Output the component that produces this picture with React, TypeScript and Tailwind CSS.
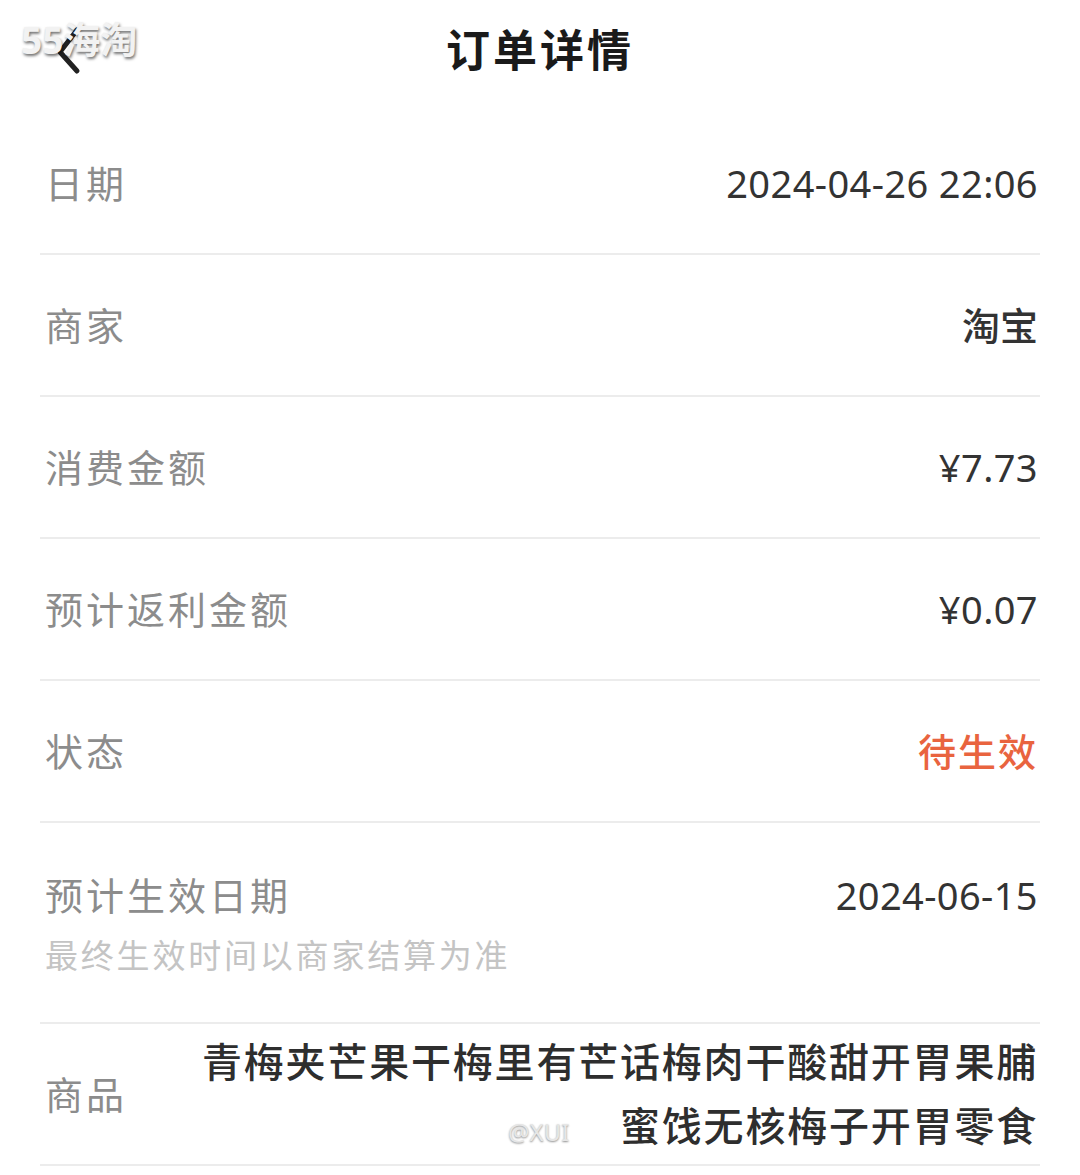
import React from "react";

const FONT = { fontFamily: '"Noto Sans", "Noto Sans CJK SC", sans-serif' };

function Row({ label, value, valueClass = "" }: { label: string; value: string; valueClass?: string }) {
  return (
    <div className="flex h-[142px] items-center justify-between border-b-2 border-[#ececec] pl-[5px] pr-[2px]">
      <span className="text-[38px] tracking-[3px] text-[#8c8c8c]">{label}</span>
      <span className={"text-[38px] " + (valueClass || "tracking-[0.4px] text-[#333333]")}>{value}</span>
    </div>
  );
}

export default function App() {
  return (
    <div className="relative min-h-[1175px] w-[1080px] overflow-hidden bg-white" style={FONT}>
      {/* header */}
      <div className="relative flex h-[113px] items-start justify-center pt-[20px]">
        <svg className="absolute left-[54px] top-[26px]" width="32" height="50" viewBox="0 0 32 50">
          <polyline points="23,4 6,26 23,45" fill="none" stroke="#222" strokeWidth="5" strokeLinecap="round" strokeLinejoin="round" />
        </svg>
        <span className="text-[44px] font-bold leading-[60px] tracking-[3px] text-[#1a1a1a]">订单详情</span>
      </div>
      <div className="absolute left-[21px] top-[16px] text-[37px] font-bold leading-[48px] text-[#f2f2f2] [text-shadow:1px_2px_3px_rgba(0,0,0,0.55)]">
        55海淘
      </div>

      <div className="px-[40px]">
        <Row label="日期" value="2024-04-26 22:06" />
        <Row label="商家" value="淘宝" valueClass="text-[#333333] font-medium" />
        <Row label="消费金额" value="¥7.73" />
        <Row label="预计返利金额" value="¥0.07" />
        <Row label="状态" value="待生效" valueClass="text-[#e9643f] font-medium tracking-[2px]" />

        <div className="flex h-[201px] flex-col justify-center border-b-2 border-[#ececec] pl-[5px] pr-[2px]">
          <div className="flex items-center justify-between">
            <span className="text-[38px] leading-[56px] tracking-[3px] text-[#8c8c8c]">预计生效日期</span>
            <span className="text-[38px] leading-[56px] tracking-[0.4px] text-[#333333]">2024-06-15</span>
          </div>
          <div className="mt-[10px] text-[33px] leading-[46px] tracking-[2.8px] text-[#c4c4c4]">最终生效时间以商家结算为准</div>
        </div>

        <div className="relative flex h-[142px] items-center justify-between border-b-2 border-[#ececec] pl-[5px] pr-[2px]">
          <span className="shrink-0 text-[38px] tracking-[3px] text-[#8c8c8c]">商品</span>
          <div className="flex flex-col items-end whitespace-nowrap text-[40px] font-medium leading-[64px] tracking-[1.8px] text-[#2e2e2e]">
            <span>青梅夹芒果干梅里有芒话梅肉干酸甜开胃果脯</span>
            <span>蜜饯无核梅子开胃零食</span>
          </div>
          <span className="absolute left-[468px] top-[90px] text-[24px] text-[#e6e6e6] [text-shadow:0_1px_2px_rgba(0,0,0,0.45)]">@XUI</span>
        </div>
      </div>
    </div>
  );
}
